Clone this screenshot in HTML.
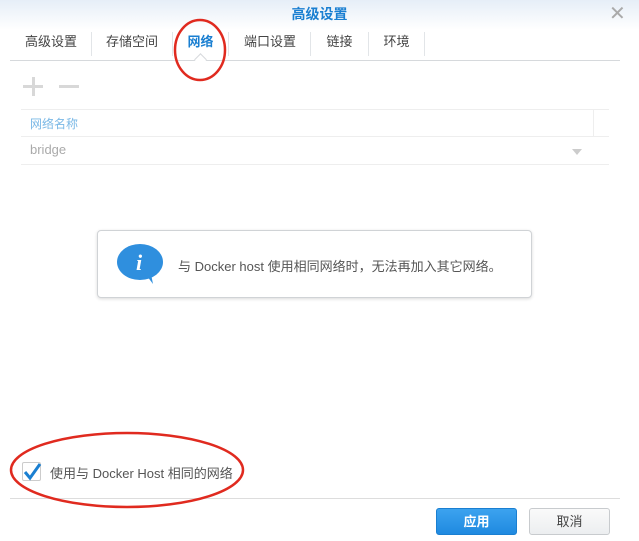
<!DOCTYPE html><html><head><meta charset="utf-8"><style>
body{margin:0;width:639px;height:541px;background:#fff;position:relative;overflow:hidden;font-family:"Liberation Sans","Noto Sans CJK SC",sans-serif;}
.a{position:absolute}
.tab{position:absolute;top:28px;height:30px;line-height:28px;font-size:13px;color:#444;text-align:center}
.sep{position:absolute;top:32px;width:1px;height:24px;background:#e2e5e8}
</style></head><body>
<div class="a" style="left:0;top:0;width:639px;height:30px;background:linear-gradient(#e6eef7,#fff)"></div>
<div class="a" style="left:0;top:4px;width:639px;text-align:center;font-size:14px;color:#1a7fd1;font-weight:bold">高级设置</div>
<div class="a" style="left:609px;top:1px;font-size:20px;color:#aaa">✕</div>
<div class="tab" style="left:12px;width:78px">高级设置</div><div class="sep" style="left:91px"></div>
<div class="tab" style="left:92px;width:80px">存储空间</div><div class="sep" style="left:172px"></div>
<div class="tab" style="left:173px;width:55px;color:#1a7fd1;font-weight:bold">网络</div><div class="sep" style="left:228px"></div>
<div class="tab" style="left:229px;width:82px">端口设置</div><div class="sep" style="left:310px"></div>
<div class="tab" style="left:311px;width:57px">链接</div><div class="sep" style="left:368px"></div>
<div class="tab" style="left:369px;width:55px">环境</div><div class="sep" style="left:424px"></div>
<div class="a" style="left:10px;top:60px;width:610px;height:1px;background:#d6d9dc"></div>
<div class="a" style="left:196px;top:55px;width:8px;height:8px;background:#fff;border-left:1px solid #d6d9dc;border-top:1px solid #d6d9dc;transform:rotate(45deg)"></div>
<div class="a" style="left:23px;top:85px;width:20px;height:3px;background:#d8d8d8"></div>
<div class="a" style="left:32px;top:77px;width:3px;height:19px;background:#d8d8d8"></div>
<div class="a" style="left:59px;top:85px;width:20px;height:3px;background:#d8d8d8"></div>
<div class="a" style="left:21px;top:109px;width:588px;height:1px;background:#eee"></div>
<div class="a" style="left:593px;top:110px;width:1px;height:26px;background:#eee"></div>
<div class="a" style="left:30px;top:115px;font-size:12px;color:#7ab8e6">网络名称</div>
<div class="a" style="left:21px;top:136px;width:588px;height:1px;background:#eee"></div>
<div class="a" style="left:30px;top:142px;font-size:13px;color:#aaa">bridge</div>
<div class="a" style="left:572px;top:149px;width:0;height:0;border-left:5px solid transparent;border-right:5px solid transparent;border-top:6px solid #ccc"></div>
<div class="a" style="left:21px;top:164px;width:588px;height:1px;background:#eee"></div>
<div class="a" style="left:97px;top:230px;width:433px;height:66px;border:1px solid #d0d3d6;border-radius:4px;box-shadow:0 1px 3px rgba(0,0,0,.15);background:#fff"></div>
<svg class="a" style="left:117px;top:242px" width="48" height="44"><path d="M30 34 L36 42 L34 32Z" fill="#2f8fde"/><ellipse cx="23" cy="20" rx="23" ry="18" fill="#2f8fde"/><text x="19" y="28" font-family="Liberation Serif" font-style="italic" font-weight="bold" font-size="22" fill="#fff">i</text></svg>
<div class="a" style="left:178px;top:256px;font-size:13px;color:#555">与 Docker host 使用相同网络时，无法再加入其它网络。</div>
<div class="a" style="left:22px;top:462px;width:17px;height:17px;border:1px solid #ccc;border-radius:2px;background:#fff"></div>
<svg class="a" style="left:21px;top:460px" width="22" height="22"><path d="M4 12 L9 18 L19 4" stroke="#1a7fd1" stroke-width="3" fill="none"/></svg>
<div class="a" style="left:50px;top:463px;font-size:13px;color:#555">使用与 Docker Host 相同的网络</div>
<div class="a" style="left:10px;top:498px;width:610px;height:1px;background:#ddd"></div>
<div class="a" style="left:436px;top:508px;width:81px;height:27px;border-radius:3px;background:linear-gradient(#3ca3ef,#1f8ae0);border:1px solid #1a7fd1;box-sizing:border-box;color:#fff;font-size:13px;text-align:center;line-height:26px;font-weight:bold">应用</div>
<div class="a" style="left:529px;top:508px;width:81px;height:27px;border-radius:3px;background:linear-gradient(#fafafa,#eceef0);border:1px solid #c8cbce;box-sizing:border-box;color:#444;font-size:13px;text-align:center;line-height:26px">取消</div>
<svg class="a" style="left:0;top:0" width="639" height="541"><ellipse cx="200" cy="50" rx="25" ry="30" fill="none" stroke="#e02a1f" stroke-width="2.5"/><ellipse cx="127" cy="470" rx="116" ry="37" fill="none" stroke="#e02a1f" stroke-width="2.5"/></svg>
</body></html>
